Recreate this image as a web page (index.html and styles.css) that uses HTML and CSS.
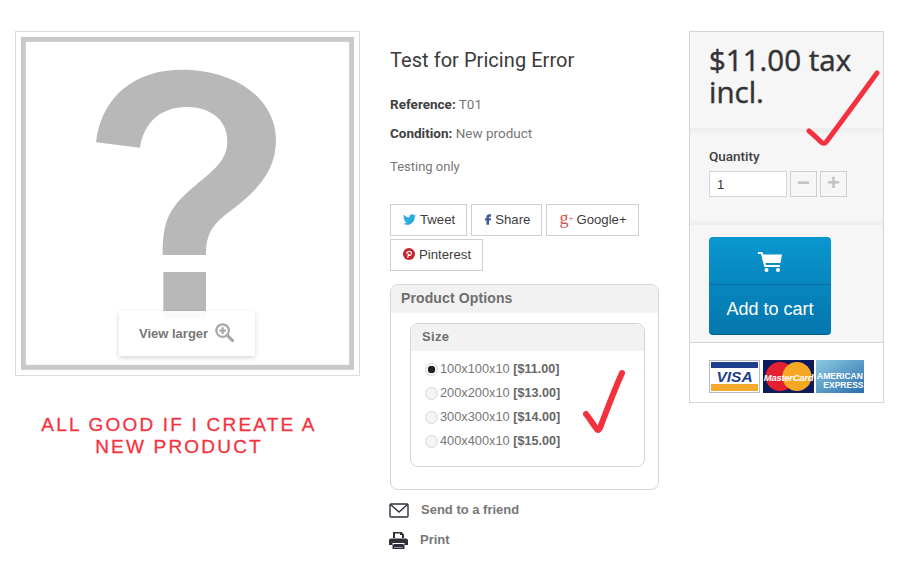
FILE: index.html
```html
<!DOCTYPE html>
<html lang="en">
<head>
<meta charset="utf-8">
<title>Test for Pricing Error</title>
<link rel="stylesheet" href="styles.css">
</head>
<body>
<main class="page">
  <section class="col-image">
    <div class="frame">
      <svg class="placeholder" viewBox="63 52 999 999" aria-hidden="true">
        <rect x="70" y="59" width="985" height="984" class="ph-border"/>
        <g class="ph-blur">
          <path class="ph-mark" d="M288 368C305 225 410 150 545 150C710 150 828 240 828 362C828 455 770 515 690 575C640 612 618 640 618 706H488C488 620 500 575 560 520C630 458 682 430 682 365C682 300 630 262 560 262C485 262 432 305 420 384Z"/>
          <rect x="490" y="757" width="128" height="140" class="ph-mark"/>
        </g>
      </svg>
      <div class="view-larger">
        <span>View larger</span>
        <svg class="zoom-icon" viewBox="0 0 20 20" aria-hidden="true">
          <circle cx="8" cy="8" r="6.6"/>
          <path d="M8 4.5v7M4.5 8h7"/>
          <path class="zoom-handle" d="M13 13l5.5 5.5"/>
        </svg>
      </div>
    </div>
    <p class="caption">ALL GOOD IF I CREATE A<br>NEW PRODUCT</p>
  </section>

  <section class="col-info">
    <h1 class="title">Test for Pricing Error</h1>
    <p class="meta meta-first"><b>Reference:</b> T01</p>
    <p class="meta"><b>Condition:</b> New product</p>
    <p class="desc">Testing only</p>
    <div class="social">
      <a class="soc-btn">
        <svg class="soc-ic ic-tw" viewBox="0 0 24 24" aria-hidden="true"><path d="M23.95 4.57a10 10 0 0 1-2.82.78 4.96 4.96 0 0 0 2.16-2.72c-.95.55-2 .95-3.13 1.18a4.92 4.92 0 0 0-8.38 4.48C7.69 8.09 4.07 6.13 1.64 3.16a4.82 4.82 0 0 0-.67 2.48c0 1.71.87 3.21 2.19 4.1a4.9 4.9 0 0 1-2.23-.61v.06a4.92 4.92 0 0 0 3.95 4.83 5 5 0 0 1-2.21.08 4.94 4.94 0 0 0 4.6 3.42A9.87 9.87 0 0 1 0 19.54a14 14 0 0 0 7.56 2.21c9.05 0 14-7.5 14-13.98 0-.21 0-.42-.02-.63A9.94 9.94 0 0 0 24 4.59z"/></svg>
        Tweet
      </a>
      <a class="soc-btn soc-share">
        <svg class="ic-fb" viewBox="6 3 12 21" aria-hidden="true"><path d="M14.5 8H18V3h-3.5C11 3 9 5.2 9 8.5V11H6v4.500h3V24h5v-8.500h3.500l.5-4.500h-4V9c0-.6.4-1 1-1z"/></svg>
        Share
      </a>
      <a class="soc-btn"><span class="gplus">g<span class="gplus-sign">+</span></span> Google+</a>
      <a class="soc-btn">
        <svg class="ic-pin" viewBox="0 0 24 24" aria-hidden="true"><circle cx="12" cy="12" r="12"/><path class="pin-p" d="M9.300 19.500l1.900-8M8 12c-1-3 1.500-5.500 4.500-5.500s4.800 2 4.300 4.500-2 4-4 3.700c-1-.2-1.500-.8-1.700-1.500"/></svg>
        Pinterest
      </a>
    </div>
    <div class="options">
      <h2 class="options-head">Product Options</h2>
      <div class="size">
        <h3 class="size-head">Size</h3>
        <ul class="size-list">
          <li><span class="radio radio-on"></span>100x100x10 <b>[$11.00]</b></li>
          <li><span class="radio"></span>200x200x10 <b>[$13.00]</b></li>
          <li><span class="radio"></span>300x300x10 <b>[$14.00]</b></li>
          <li><span class="radio"></span>400x400x10 <b>[$15.00]</b></li>
        </ul>
      </div>
    </div>
    <a class="action action-send">
      <svg class="act-ic" viewBox="0 0 20 15" aria-hidden="true"><rect x="1" y="1" width="18" height="13" rx="1"/><path d="M1.500 1.500L10 9l8.500-7.500"/></svg>
      Send to a friend
    </a>
    <a class="action action-print">
      <svg class="print-ic" viewBox="0 0 19 17" aria-hidden="true"><path d="M4 0h8.500L15 2.500V6H13V3h-2V1.500H6V6H4zM2 6.500h15a2 2 0 0 1 2 2V13h-3.500v-2h-12v2H0V8.500a2 2 0 0 1 2-2zM5 12h9v3H5zM3.500 12.500v4.500h12v-4.500H14v3H5v-3z"/></svg>
      Print
    </a>
    <svg class="check check-size" viewBox="0 0 44 66" aria-hidden="true"><path d="M3 45C7 50 10 55 13 59Q15 63 17 59C23 43 31 22 39 4"/></svg>
  </section>

  <aside class="col-buy">
    <div class="price-box"><p class="price">$11.00 tax incl.</p></div>
    <div class="qty-box">
      <label class="qty-label">Quantity</label>
      <div class="qty-row">
        <span class="qty-input">1</span>
        <span class="qty-btn">&minus;</span>
        <span class="qty-btn">+</span>
      </div>
    </div>
    <div class="cart-box">
      <a class="cart-btn">
        <span class="cart-top">
          <svg class="cart-ic" viewBox="0 0 24 20" aria-hidden="true"><path d="M0 0h4.500l.8 2.500H24l-1.500 8.500H7.600l.4 2h14v2H6.300L3 2H0z"/><circle cx="8.500" cy="18" r="2"/><circle cx="20" cy="18" r="2"/></svg>
        </span>
        <span class="cart-text">Add to cart</span>
      </a>
    </div>
    <div class="cards">
      <svg class="card" viewBox="0 0 51 33" aria-label="Visa">
        <rect class="c-visa-bg" x=".5" y=".5" width="50" height="32"/>
        <rect class="c-visa-top" x="2" y="2" width="47" height="6"/>
        <rect class="c-visa-bot" x="2" y="24" width="47" height="7"/>
        <text class="c-visa-t" x="25.500" y="22">VISA</text>
      </svg>
      <svg class="card" viewBox="0 0 51 33" aria-label="MasterCard">
        <rect class="c-mc-bg" width="51" height="33"/>
        <circle class="c-mc-r" cx="17" cy="16.500" r="14.500"/>
        <circle class="c-mc-y" cx="34" cy="16.500" r="14.500"/>
        <text class="c-mc-t" x="25.500" y="20.500">MasterCard</text>
      </svg>
      <svg class="card card-ax" viewBox="0 0 48 33" aria-label="American Express">
        <defs><linearGradient id="amex" x1="0" y1="0" x2="1" y2="1"><stop offset="0" stop-color="#8ccbe0"/><stop offset="1" stop-color="#2a6cae"/></linearGradient></defs>
        <rect width="48" height="33" fill="url(#amex)"/>
        <text class="c-ax-t" x="24" y="19">AMERICAN</text>
        <text class="c-ax-t c-ax-r" x="47.500" y="28">EXPRESS</text>
      </svg>
    </div>
  </aside>
  <svg class="check check-price" viewBox="0 0 74 76" aria-hidden="true"><path d="M3 61C8 65 12 69 15 72Q18 75 21 71C33 55 55 25 71 3"/></svg>
</main>
</body>
</html>
```
FILE: styles.css
```css
* { box-sizing: border-box; }
html, body { margin: 0; padding: 0; background: #fff; overflow: hidden; }
body { height: 565px; font-family: "Roboto", "Liberation Sans", sans-serif; color: #777; }
h1, h2, h3, p, ul { margin: 0; padding: 0; }
.page { position: relative; display: flex; align-items: flex-start; padding: 31px 0 0 15px; height: 565px; }

/* image column */
.col-image { width: 345px; margin-right: 30px; flex: none; }
.frame { position: relative; width: 345px; height: 345px; border: 1px solid #dbdbdb; }
.placeholder { display: block; position: absolute; left: 5px; top: 5px; width: 333px; height: 333px; }
.ph-border { fill: #fff; stroke: #c9c9c9; stroke-width: 15; }
.ph-mark { fill: #b9b8b8; }
.ph-blur { filter: blur(2px); }
.view-larger { position: absolute; left: 103px; top: 279px; width: 136px; height: 45px; display: flex; align-items: center; padding-left: 20px; gap: 7px; background: rgba(255,255,255,.92); box-shadow: 0 2px 5px rgba(0,0,0,.16); font: 700 13px "Liberation Sans", sans-serif; color: #777; }
.zoom-icon { width: 19px; height: 19px; margin-top: -3px; fill: none; stroke: #a9a9a9; stroke-width: 2.4; }
.zoom-handle { stroke-width: 3.4; stroke-linecap: round; }
.caption { margin-top: 38px; width: 328px; text-align: center; font: 400 19px/22px "Liberation Sans", sans-serif; letter-spacing: 2.2px; color: #f5333f; -webkit-text-stroke: .3px #f5333f; }

/* info column */
.col-info { position: relative; width: 269px; margin-right: 30px; flex: none; }
.title { margin-top: 17px; font: 400 20px/24px "Roboto", sans-serif; letter-spacing: .05px; color: #3a3a3a; }
.meta { font-size: 13.5px; line-height: 18px; margin-top: 11px; }
.meta-first { margin-top: 23px; }
.meta b { color: #3f3f3f; font-weight: 700; }
.desc { font-size: 13px; line-height: 18px; margin-top: 16px; }
.social { display: flex; flex-wrap: wrap; gap: 3px 4px; margin-top: 28px; }
.soc-btn { display: flex; align-items: center; gap: 4px; height: 32px; padding: 0 11px 2px 12px; border: 1px solid #cfcfcf; font: 400 13.2px "Liberation Sans", sans-serif; color: #3d3d3d; }
.soc-share { padding-left: 13px; }
.soc-ic { width: 13px; height: 13px; flex: none; }
.ic-tw { fill: #2ba9e1; }
.ic-fb { width: 6px; height: 13px; flex: none; fill: #3b5998; }
.ic-pin { width: 12px; height: 12px; flex: none; fill: #c9212e; }
.pin-p { fill: none; stroke: #fff; stroke-width: 2.500; }
.gplus { width: 13px; flex: none; font: 400 18px/16px "Liberation Serif", serif; color: #d9544d; white-space: nowrap; margin-top: -3px; }
.gplus-sign { font-size: 9px; vertical-align: 3px; }
.options { height: 206px; margin-top: 13px; border: 1px solid #d6d4d4; border-radius: 8px; overflow: hidden; }
.options-head { height: 28px; padding-left: 10px; background: #f2f2f2; font: 700 14px/27px "Liberation Sans", sans-serif; letter-spacing: .12px; color: #6f6f6f; }
.size { height: 144px; margin: 10px 13px 0 19px; border: 1px solid #d6d4d4; border-radius: 8px; overflow: hidden; }
.size-head { height: 27px; padding-left: 11px; background: #f2f2f2; font: 700 13px/26px "Liberation Sans", sans-serif; letter-spacing: .3px; color: #6f6f6f; }
.size-list { list-style: none; padding: 6px 0 0 14px; font: 400 12.8px/24px "Liberation Sans", sans-serif; color: #777; }
.size-list li { display: flex; align-items: center; gap: 2px; white-space: pre; }
.size-list b { margin-left: -2px; font-size: 12.6px; font-weight: 700; color: #666; }
.radio { width: 13px; height: 13px; flex: none; border: 1px solid #d8d8d8; border-radius: 50%; background: #f4f4f4; }
.radio-on { background: radial-gradient(circle, #222 0 3.500px, #f4f4f4 4px); }
.action { display: flex; align-items: center; font: 700 13px/18px "Liberation Sans", sans-serif; color: #777; }
.action-send { gap: 12px; margin-top: 11px; margin-left: -1px; }
.action-print { gap: 12px; margin-top: 12px; margin-left: -1px; }
.act-ic { width: 20px; height: 15px; fill: none; stroke: #2c3140; stroke-width: 1.400; }
.print-ic { width: 19px; height: 17px; fill: #2c2f3a; }

.check { position: absolute; fill: none; stroke: #f4323f; stroke-linecap: round; stroke-linejoin: round; }
.check-size { width: 44px; height: 66px; left: 193px; top: 338px; stroke-width: 6; }
.check-price { width: 74px; height: 76px; left: 806px; top: 70px; stroke-width: 5; }

/* buy column */
.col-buy { width: 195px; height: 372px; flex: none; border: 1px solid #d6d4d4; background: #f6f6f6; }
.price-box { height: 97px; padding: 12px 19px 0; box-shadow: inset 0 -1px 0 #f0f0f0; }
.price { font: 400 29.5px/32px "Open Sans", sans-serif; color: #333; -webkit-text-stroke: .45px #333; }
.qty-box { height: 96px; padding: 19px 19px 0; background: linear-gradient(#ececec, #f6f6f6 6px, #f6f6f6 90px, #ececec); }
.qty-label { display: block; font: 500 13.5px/16px "Roboto", sans-serif; color: #3f3f3f; }
.qty-row { display: flex; gap: 3px; margin-top: 7px; }
.qty-input { width: 78px; height: 26px; padding-left: 7px; background: #fff; border: 1px solid #d6d4d4; font: 400 13px/25px "Liberation Sans", sans-serif; color: #333; }
.qty-btn { width: 27px; height: 26px; border: 1px solid #cfcfcf; background: #f6f6f6; text-align: center; font: 700 22px/22px "Liberation Sans", sans-serif; color: #c3c3c3; }
.cart-box { height: 118px; padding: 12px 19px 0; border-bottom: 1px solid #d6d4d4; }
.cart-btn { display: block; width: 122px; height: 98px; border-radius: 4px; border-bottom: 1px solid #06608f; background: linear-gradient(#0a97cf, #0476ad); color: #fff; }
.cart-top { display: flex; justify-content: center; align-items: center; height: 48px; border-bottom: 1px solid #0a6b9e; }
.cart-ic { width: 24px; height: 20px; fill: #fff; margin-top: 3px; }
.cart-text { display: block; text-align: center; font: 400 18px/48px "Liberation Sans", sans-serif; }
.cards { display: flex; gap: 3px; height: 59px; padding: 17px 0 0 19px; background: #fff; }
.card { width: 51px; height: 33px; flex: none; }
.card-ax { width: 48px; margin-left: -1px; }
.c-visa-bg { fill: #fff; stroke: #b9b9c9; }
.c-visa-top { fill: #1f3f8c; }
.c-visa-bot { fill: #f4a92e; }
.c-visa-t { font: italic 700 15.5px "Liberation Sans", sans-serif; fill: #1f3f8c; text-anchor: middle; }
.c-mc-bg { fill: #0d1a5e; }
.c-mc-r { fill: #e5202e; }
.c-mc-y { fill: #f7a823; }
.c-mc-t { font: italic 700 9.500px "Liberation Sans", sans-serif; fill: #fff; text-anchor: middle; letter-spacing: -.3px; }
.c-ax-t { font: 700 8.5px "Liberation Sans", sans-serif; fill: #fff; text-anchor: middle; }
.c-ax-r { text-anchor: end; }
```
